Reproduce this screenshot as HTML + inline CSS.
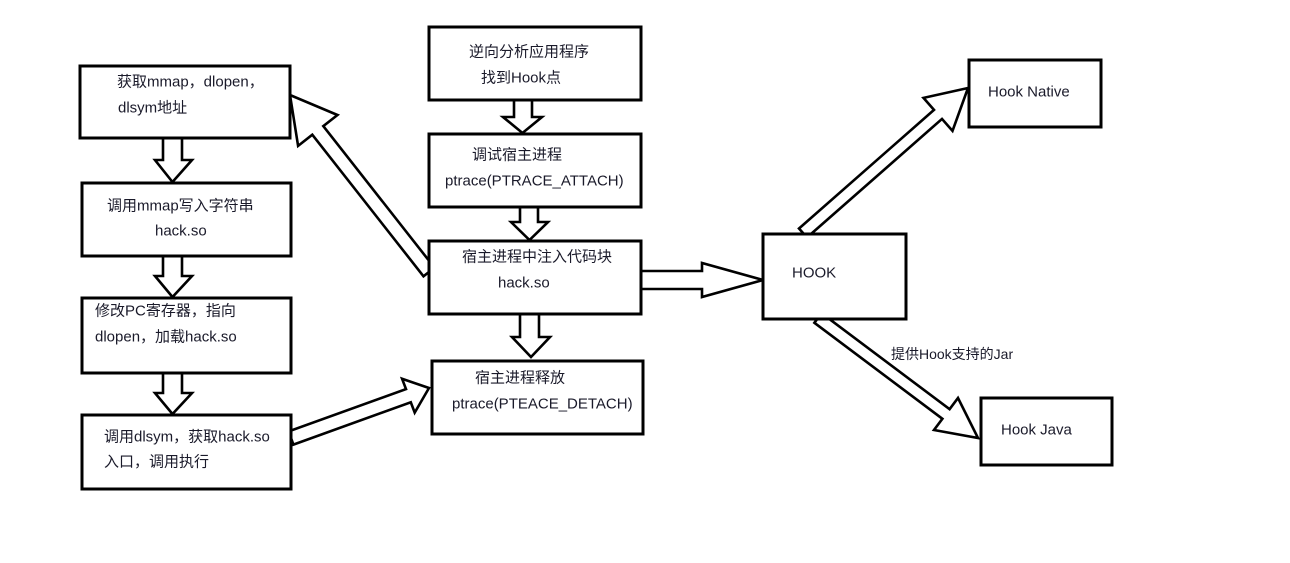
<!DOCTYPE html>
<html><head><meta charset="utf-8"><style>
html,body{margin:0;padding:0;background:#fff;}
svg{display:block;}
text{font-family:"Liberation Sans","Noto Sans CJK SC",sans-serif;font-size:15px;fill:#1a1a2a;dominant-baseline:central;}
</style></head><body>
<svg width="1290" height="563" viewBox="0 0 1290 563" xmlns="http://www.w3.org/2000/svg">
<g fill="#fff" stroke="#000" stroke-width="2.6" stroke-linejoin="miter">
<polygon points="434.5,267.7 323.3,126.1 337.5,115 290,95 298.1,145.9 312.3,134.7 423.5,276.3"/>
<polygon points="293.4,444.6 410.8,402.3 414.7,412.6 429,388 402.1,378.8 406,389.1 288.6,431.4"/>
<polygon points="807,237.5 942,118.9 952.5,130.9 968,88 923.5,97.9 934,109.9 799,228.5"/>
<polygon points="814.4,322.8 942.4,418.8 934,430 978,438 958,398 949.6,409.2 821.6,313.2"/>
<polygon points="640,271 702,271 702,263 763,280 702,297 702,289 640,289"/>
<polygon points="163,138 182,138 182,160 192,160 172.5,182 155,160 163,160"/>
<polygon points="163,256 182,256 182,276 192,276 172.5,297 155,276 163,276"/>
<polygon points="163,373 182,373 182,393 192,393 172.5,414 155,393 163,393"/>
<polygon points="514,100 532,100 532,117 542,117 522.5,133 503,117 514,117"/>
<polygon points="520,207 538,207 538,222 548,222 529.5,240 511,222 520,222"/>
<polygon points="520,314 539,314 539,337 550,337 531,357 512,337 520,337"/>
</g>
<g fill="#fff" stroke="#000" stroke-width="3">
<rect x="80" y="66" width="210" height="72"/>
<rect x="82" y="183" width="209" height="73"/>
<rect x="82" y="298" width="209" height="75"/>
<rect x="82" y="415" width="209" height="74"/>
<rect x="429" y="27" width="212" height="73"/>
<rect x="429" y="134" width="212" height="73"/>
<rect x="429" y="241" width="212" height="73"/>
<rect x="432" y="361" width="211" height="73"/>
<rect x="763" y="234" width="143" height="85"/>
<rect x="969" y="60" width="132" height="67"/>
<rect x="981" y="398" width="131" height="67"/>
</g>
<text x="117" y="82">获取mmap，dlopen，</text>
<text x="118" y="108">dlsym地址</text>
<text x="107" y="206">调用mmap写入字符串</text>
<text x="155" y="231">hack.so</text>
<text x="95" y="311">修改PC寄存器，指向</text>
<text x="95" y="337">dlopen，加载hack.so</text>
<text x="104" y="437">调用dlsym，获取hack.so</text>
<text x="104" y="462">入口，调用执行</text>
<text x="469" y="52">逆向分析应用程序</text>
<text x="481" y="78">找到Hook点</text>
<text x="472" y="155">调试宿主进程</text>
<text x="445" y="181">ptrace(PTRACE_ATTACH)</text>
<text x="462" y="257">宿主进程中注入代码块</text>
<text x="498" y="283">hack.so</text>
<text x="475" y="378">宿主进程释放</text>
<text x="452" y="404">ptrace(PTEACE_DETACH)</text>
<text x="792" y="273">HOOK</text>
<text x="988" y="92">Hook Native</text>
<text x="1001" y="430">Hook Java</text>
<text x="891" y="354" style="font-size:14px">提供Hook支持的Jar</text>
</svg>
</body></html>
